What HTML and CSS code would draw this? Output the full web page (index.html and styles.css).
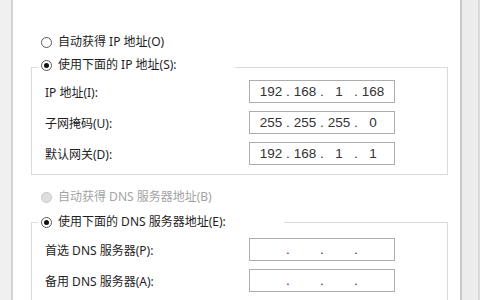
FILE: index.html
```html
<!DOCTYPE html>
<html lang="zh-CN">
<head>
<meta charset="utf-8">
<title>IPv4 属性</title>
<link rel="stylesheet" href="styles.css">
</head>
<body>
<div class="edge-left"></div>
<main class="main">
  <div class="radio-row">
    <span class="radio"></span><span>自动获得 IP 地址(O)</span>
  </div>
  <section class="group group-ip">
    <div class="legend">
      <div class="radio-row tight">
        <span class="radio checked"></span><span>使用下面的 IP 地址(S):</span>
      </div>
    </div>
    <div class="rows rows-ip">
      <label class="label">IP 地址(I):</label>
      <div class="ipbox"><span class="oct">192</span><span class="dot">.</span><span class="oct">168</span><span class="dot">.</span><span class="oct">1</span><span class="dot">.</span><span class="oct">168</span></div>
      <label class="label">子网掩码(U):</label>
      <div class="ipbox"><span class="oct">255</span><span class="dot">.</span><span class="oct">255</span><span class="dot">.</span><span class="oct">255</span><span class="dot">.</span><span class="oct">0</span></div>
      <label class="label">默认网关(D):</label>
      <div class="ipbox"><span class="oct">192</span><span class="dot">.</span><span class="oct">168</span><span class="dot">.</span><span class="oct">1</span><span class="dot">.</span><span class="oct">1</span></div>
    </div>
  </section>
  <div class="radio-row disabled dns-auto">
    <span class="radio"></span><span>自动获得 DNS 服务器地址(B)</span>
  </div>
  <section class="group group-dns">
    <div class="legend legend-dns">
      <div class="radio-row tight">
        <span class="radio checked"></span><span>使用下面的 DNS 服务器地址(E):</span>
      </div>
    </div>
    <div class="rows rows-dns">
      <label class="label">首选 DNS 服务器(P):</label>
      <div class="ipbox"><span class="oct"></span><span class="dot">.</span><span class="oct"></span><span class="dot">.</span><span class="oct"></span><span class="dot">.</span><span class="oct"></span></div>
      <label class="label">备用 DNS 服务器(A):</label>
      <div class="ipbox"><span class="oct"></span><span class="dot">.</span><span class="oct"></span><span class="dot">.</span><span class="oct"></span><span class="dot">.</span><span class="oct"></span></div>
    </div>
  </section>
</main>
<div class="edge-right"></div>
</body>
</html>
```
FILE: styles.css
```css
* { box-sizing: border-box; }
html, body { margin: 0; padding: 0; }
body {
  width: 480px;
  height: 300px;
  overflow: hidden;
  display: flex;
  background: #ffffff;
  font-family: "Noto Sans", "Noto Sans CJK SC", sans-serif;
  font-size: 12px;
  color: #1e1e1e;
}
.edge-left {
  width: 13px;
  flex: none;
  background: #f0f0f0;
  border-right: 2px solid #d3d3d3;
}
.edge-right {
  width: 20px;
  flex: none;
  background: #ececec;
  border-left: 2px solid #c9c9c9;
  border-right: 2px solid #dadada;
}
.main {
  flex: 1;
  background: #fff;
  padding: 32px 12px 0 18px;
  display: flex;
  flex-direction: column;
}
.radio-row {
  display: flex;
  align-items: center;
  gap: 6px;
  height: 20px;
  line-height: 20px;
  padding-left: 10px;
  white-space: nowrap;
}
.radio-row.tight { padding-left: 0; }
.radio {
  width: 11px;
  height: 11px;
  flex: none;
  border-radius: 50%;
  border: 1px solid #5a5a5a;
  background: #fff;
  position: relative;
}
.radio.checked::after {
  content: "";
  position: absolute;
  left: 2px;
  top: 2px;
  width: 5px;
  height: 5px;
  border-radius: 50%;
  background: #111;
}
.disabled { color: #a3a3a3; }
.disabled .radio {
  border-color: #c6c6c6;
  background: #dedede;
}
.group {
  border: 1px solid #dadada;
  width: 417px;
}
.group-ip { margin-top: 15px; padding-bottom: 5px; }
.group-dns { margin-top: 15px; flex: 1; border-bottom: none; }
.legend {
  width: fit-content;
  margin: -13px 0 0 6px;
  padding: 0 58px 0 3px;
  background: #fff;
}
.legend-dns { margin-top: -11px; }
.dns-auto { margin-top: 12px; }
.rows {
  display: grid;
  grid-template-columns: 204px 146px;
  grid-auto-rows: 31px;
  align-items: center;
  padding-left: 13px;
}
.rows-ip { margin-top: 1px; }
.rows-dns { margin-top: 2px; }
.label { white-space: nowrap; }
.ipbox {
  height: 23px;
  border: 1px solid #acacac;
  display: flex;
  align-items: center;
  padding-left: 7px;
  font-family: "Liberation Sans", "Noto Sans", sans-serif;
  font-size: 13.5px;
  color: #333;
}
.oct { width: 28px; text-align: center; }
.dot { width: 6px; text-align: center; }
```
